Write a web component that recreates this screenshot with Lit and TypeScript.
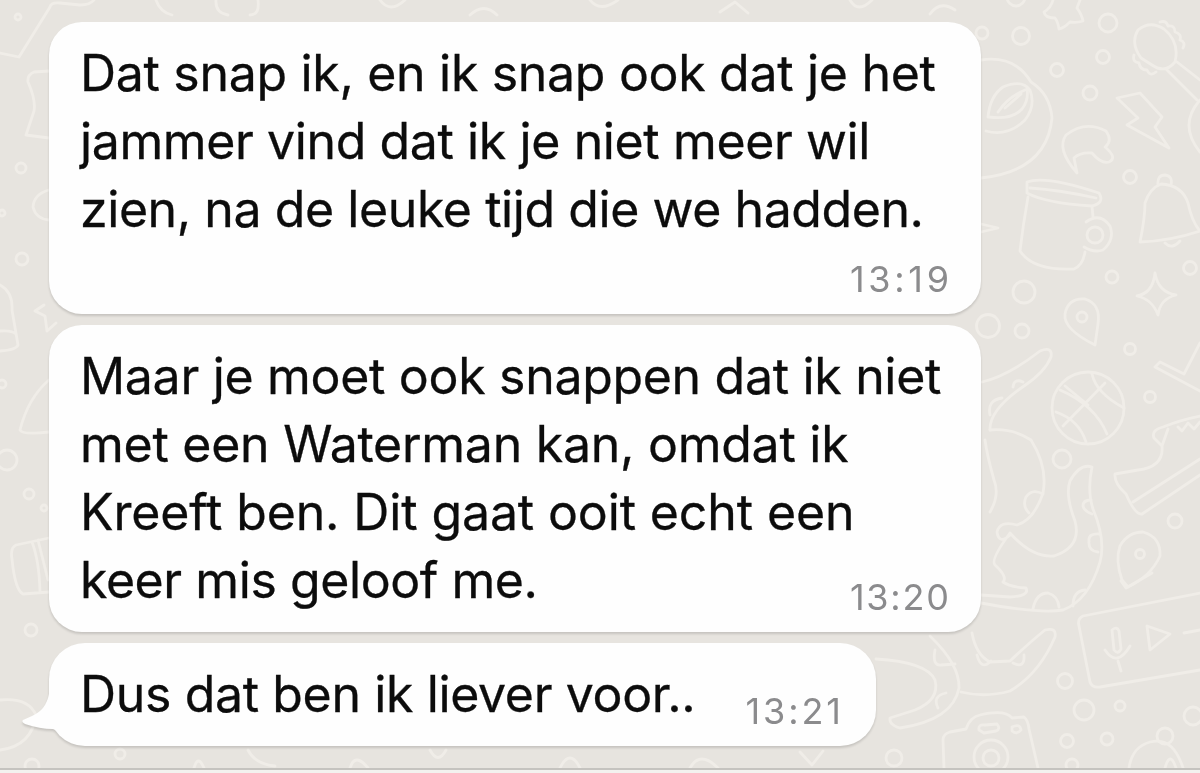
import { LitElement, html, svg, css } from 'lit';
import { customElement, property } from 'lit/decorators.js';

interface Message {
    lines: { text: string; spacing: number }[];
    time: string;
    timeSpacing: number;
    layout: 'below' | 'inline' | 'short';
}

const MESSAGES: Message[] = [
    {
        lines: [
            { text: 'Dat snap ik, en ik snap ook dat je het', spacing: -0.31 },
            { text: 'jammer vind dat ik je niet meer wil', spacing: -0.39 },
            { text: 'zien, na de leuke tijd die we hadden.', spacing: -0.42 },
        ],
        time: '13:19',
        timeSpacing: 3.7,
        layout: 'below',
    },
    {
        lines: [
            { text: 'Maar je moet ook snappen dat ik niet', spacing: -0.31 },
            { text: 'met een Waterman kan, omdat ik', spacing: -0.26 },
            { text: 'Kreeft ben. Dit gaat ooit echt een', spacing: -0.13 },
            { text: 'keer mis geloof me.', spacing: -0.43 },
        ],
        time: '13:20',
        timeSpacing: 1.8,
        layout: 'inline',
    },
    {
        lines: [{ text: 'Dus dat ben ik liever voor..', spacing: -0.36 }],
        time: '13:21',
        timeSpacing: 2.9,
        layout: 'short',
    },
];

// x, y, radius
const DOTS = [
    [1108, 23, 9], [1021, 36, 8.5], [982, 33, 6], [1103, 57, 6.5], [1057, 70, 6.5],
    [1090, 93, 7], [1130, 177, 6.5], [1016, -3, 9], [1024, 292, 11], [988, 326, 11.5],
    [1022, 331, 7], [1112, 277, 6], [1130, 349, 5.5], [1190, 268, 6.5], [1150, 397, 5.5],
    [1062, 459, 9], [1175, 521, 7], [1065, 681, 7.5], [1084, 710, 10], [1120, 706, 5],
    [1067, 741, 6.5], [1107, 739, 6], [1193, 716, 9], [1165, 736, 8], [1072, 765, 6],
    [894, 758, 8], [21, 168, 5], [18, 17, 3], [2, 213, 3], [29, 494, 5], [44, 508, 3],
    [31, 630, 6], [7, 460, 10], [2, 384, 4], [32, 766, 7], [120, 754, 5], [22, 259, 6],
];

const DOODLES = [
    // star, ball and leaf
    'M1053 0Q1051 8 1044 12Q1045 18 1055 18Q1058 22 1059 29Q1064 28 1070 22Q1077 23 1083 21Q1082 15 1077 8L1080 0',
    'M981 60Q1015 55 1031 82Q1050 94 1052 118Q1047 171 981 178',
    'M988 117Q990 96 1003 87Q1022 79 1030 90Q1036 106 1025 120Q1008 137 986 131M989 117Q1012 120 1022 109Q1029 100 1027 88M998 112Q1008 97 1025 90M1005 108L1021 94',
    // maraca
    'M1141 58Q1130 43 1138 30Q1150 20 1164 29Q1180 42 1175 62Q1165 74 1152 65ZM1177 62L1200 80M1167 70L1197 100M1160 22q6 -2 8 4q7 -1 7 6q7 2 5 8q6 2 3 8M1134 55q-2 7 5 8q1 7 8 7q3 7 9 2',
    'M1200 100Q1178 125 1200 152',
    // lightning and cashew
    'M1117 98L1140 93L1162 117L1155 127L1169 148L1127 125L1138 118Z',
    'M1077 173Q1056 149 1066 135Q1085 120 1106 131Q1113 141 1105 147Q1118 158 1109 162Q1101 164 1092 153Q1080 152 1074 158Z',
    // mug
    'M1027 182Q1045 175 1099 193Q1105 203 1092 206Q1045 203 1027 193ZM1030 188Q1060 190 1096 198M1028 197Q1023 225 1020 251Q1033 271 1074 269Q1083 265 1085 252M1092 206L1093 217',
    'M1086 222Q1100 212 1110 226Q1115 240 1103 250Q1094 253 1084 247',
    // bell
    'M1140 242Q1145 218 1145 203Q1150 188 1161 184Q1182 185 1188 203Q1192 222 1200 231Q1170 241 1140 242ZM1165 243Q1172 250 1180 241M1158 185Q1157 175 1165 175Q1173 176 1171 185',
    // sparkle, pin, crescent
    'M1155 273Q1158 292 1176 295Q1160 299 1158 315Q1152 299 1137 296Q1153 293 1155 273Z',
    'M981 224L998 228L981 232',
    'M1095 345Q1063 329 1065 314Q1068 298 1085 299Q1101 304 1098 324Z',
    'M982 382Q1008 376 1040 351Q1053 346 1051 357Q1045 372 1024 386Q989 410 990 430M990 415Q987 400 1002 398M1013 387q1 -9 10 -5',
    // basketball
    'M1060 390Q1095 405 1107 434M1056 412Q1079 420 1086 442M1063 426L1105 383M1092 374Q1096 393 1124 408M1065 386L1088 405',
    // check mark
    'M1155 367L1160 362L1184 374L1200 343M1155 367L1200 391',
    // sneaker
    'M1200 416Q1180 420 1163 427Q1151 430 1154 438L1162 446L1168 429M1162 446Q1164 467 1138 470L1115 474Q1114 483 1126 494Q1135 515 1142 514L1200 475M1133 502L1200 459M1178 427l4 4l6 -8l6 6l6 -7',
    // snakes and horseshoes
    'M990 430Q1013 428 1031 440Q1048 467 1043 493Q1034 520 1017 525Q1000 520 997 532Q999 545 1010 535M1010 533Q1032 558 1054 556Q1082 547 1075 521Q1065 495 1070 481Q1080 463 1092 467Q1087 491 1093 509Q1106 540 1100 562Q1089 600 1063 610Q1040 614 981 603M1010 533Q990 560 995 565Q1008 577 1003 582Q1010 587 1026 588Q1030 596 1010 597L981 595',
    'M1043 494q-11 -6 -17 3q-4 9 3 16M1091 500q-8 0 -8 6q1 5 9 8M1100 534q-12 -1 -11 7q-1 10 9 11M1073 606q0 -15 12 -16M1033 609q3 -16 15 -16q10 3 11 14M985 440Q987 455 994 480Q1000 495 990 512',
    'M1122 580Q1115 560 1120 546Q1128 532 1143 532Q1161 537 1160 556Q1151 576 1128 587Z',
    'M972 633Q976 655 990 662L1010 661Q1029 643 1045 630Q1057 627 1055 637Q1039 674 1010 691Q985 698 961 692M977 655q4 16 14 6M1013 663q12 6 11 -8',
    'M930 636Q960 665 959 688Q953 720 900 728Q889 725 890 718L915 710Q940 700 935 680Q927 662 876 659M935 650q-3 16 6 15l14 -1M946 693q-14 3 -8 15',
    // voice message card
    'M1200 593L1083 616Q1077 619 1079 626L1090 682Q1092 688 1100 687L1200 670M1112 630q5 -4 7 1l2 18q-3 6 -7 1ZM1105 650Q1117 668 1130 646M1118 661L1121 671M1147 626L1170 634L1150 650ZM1184 633L1200 630M1121 581L1126 588L1152 573',
    // camera
    'M944 768L943 740Q943 734 950 732L966 729Q970 717 980 715Q1005 709 1012 718L1024 717Q1028 720 1029 729L1038 768M979 730Q978 724 985 725L997 724Q1001 729 996 731L984 733ZM1012 727q8 -4 9 3q-4 5 -9 1Z',
    // stopwatch
    'M1129 768Q1132 747 1150 742Q1173 736 1183 768M1165 768Q1170 750 1176 768',
    // left and top edges
    'M0 53L19 57L50 7Q51 2 60 3L80 5Q90 5 94 0M49 71L34 72Q27 75 28 82Q36 100 34 111L26 135L49 138M49 190Q34 194 33 207Q36 219 49 220',
    'M156 0Q160 12 172 15M216 0Q215 13 228 15M258 0Q260 15 250 15',
    'M0 285Q13 292 12 310L18 345Q16 350 0 351M0 331Q12 330 16 334M44 305L35 311L45 316L47 331L56 323',
    'M49 380Q28 398 20 430Q22 435 49 432M49 538L16 545Q10 548 12 559Q15 590 23 594L49 592M32 542Q39 560 40 591M38 540Q43 560 48 580',
    'M0 700Q28 697 36 715Q32 746 0 750',
    'M194 768Q198 754 204 768M248 750Q255 764 275 766M350 768Q355 752 368 768M430 750Q438 765 446 750M560 768Q570 748 580 768M690 768Q700 750 718 768M800 752L812 765L823 751',
    'M380 0Q390 14 405 0M470 15Q484 2 497 15M590 0Q600 13 618 0M720 12L735 2L748 13M850 0Q858 14 872 0M930 14Q940 0 955 10',
];

@customElement('chat-wallpaper')
export class ChatWallpaper extends LitElement {
    static get styles() {
        return css`
        :host {
            display: block;
        }
        svg {
            display: block;
            width: 100%;
            height: 100%;
            fill: none;
            stroke: #f0ede8;
            stroke-width: 2.8;
            stroke-linecap: round;
            stroke-linejoin: round;
        }
        `;
    }

    render() {
        return html`
        <svg viewBox="0 0 1200 768" preserveAspectRatio="xMinYMin slice">
            ${DOODLES.map((d) => svg`<path d=${d}></path>`)}
            ${DOTS.map(([x, y, r]) => svg`<circle cx=${x} cy=${y} r=${r}></circle>`)}
            <circle cx="1095" cy="235" r="8"></circle>
            <circle cx="1082" cy="317" r="5"></circle>
            <circle cx="1088" cy="408" r="36"></circle>
            <circle cx="1140" cy="554" r="4.5"></circle>
            <circle cx="991" cy="757" r="17"></circle>
            <circle cx="991" cy="758" r="8"></circle>
        </svg>
        `;
    }
}

@customElement('chat-bubble')
export class ChatBubble extends LitElement {
    @property({ attribute: false }) message!: Message;

    static get styles() {
        return css`
        :host {
            display: block;
        }
        .bubble {
            position: relative;
            box-sizing: border-box;
            width: 932px;
            padding: 17px 33px 0 31px;
            border-radius: 33px;
            background: #fefefe;
            filter: drop-shadow(0 2px 1px rgba(0, 0, 0, 0.14));
            color: #0c0c0c;
        }
        .below { height: 292px; }
        .inline { height: 307px; }
        .short {
            width: 827px;
            height: 103px;
            border-radius: 36px;
        }
        .line {
            display: block;
            height: 68px;
            font-size: 50px;
            line-height: 68px;
            white-space: nowrap;
            -webkit-text-stroke: 0.3px #0c0c0c;
        }
        .time {
            position: absolute;
            right: 32px;
            bottom: 14px;
            color: #8b8b8d;
            font-size: 36px;
            line-height: 42px;
        }
        .short .time { right: 35px; }
        .tail {
            position: absolute;
            left: -27px;
            bottom: 10px;
            width: 62px;
            height: 52px;
            fill: #fefefe;
        }
        `;
    }

    render() {
        const { lines, time, timeSpacing, layout } = this.message;
        return html`
        <div class="bubble ${layout}">
            ${layout === 'short'
                ? html`<svg class="tail" viewBox="0 0 62 52"><path d="M27 0V10Q24 26 10 32L1 36Q-1 38 3 40Q18 45 31 45L42 50L62 40V0Z"></path></svg>`
                : null}
            ${lines.map((line) => html`<span class="line"><span style="letter-spacing: ${line.spacing}px">${line.text}</span></span>`)}
            <span class="time" style="letter-spacing: ${timeSpacing}px; margin-right: ${-timeSpacing}px">${time}</span>
        </div>
        `;
    }
}

@customElement('app-root')
export class AppRoot extends LitElement {
    static get styles() {
        return css`
        :host {
            display: block;
            position: relative;
            box-sizing: border-box;
            height: 773px;
            overflow: hidden;
            background: #e7e4df;
            font-family: Inter, "Liberation Sans", sans-serif;
        }
        .wallpaper {
            position: absolute;
            inset: 0 0 5px;
        }
        .chat {
            position: relative;
            display: flex;
            flex-direction: column;
            gap: 11px;
            box-sizing: border-box;
            height: 768px;
            padding: 22px 0 0 49px;
        }
        .input-bar {
            position: relative;
            box-sizing: border-box;
            height: 5px;
            border-top: 2px solid #c5c3bf;
            background: #f3f2ef;
        }
        `;
    }

    render() {
        return html`
        <chat-wallpaper class="wallpaper"></chat-wallpaper>
        <div class="chat">
            ${MESSAGES.map((message) => html`<chat-bubble .message=${message}></chat-bubble>`)}
        </div>
        <div class="input-bar"></div>
        `;
    }
}
